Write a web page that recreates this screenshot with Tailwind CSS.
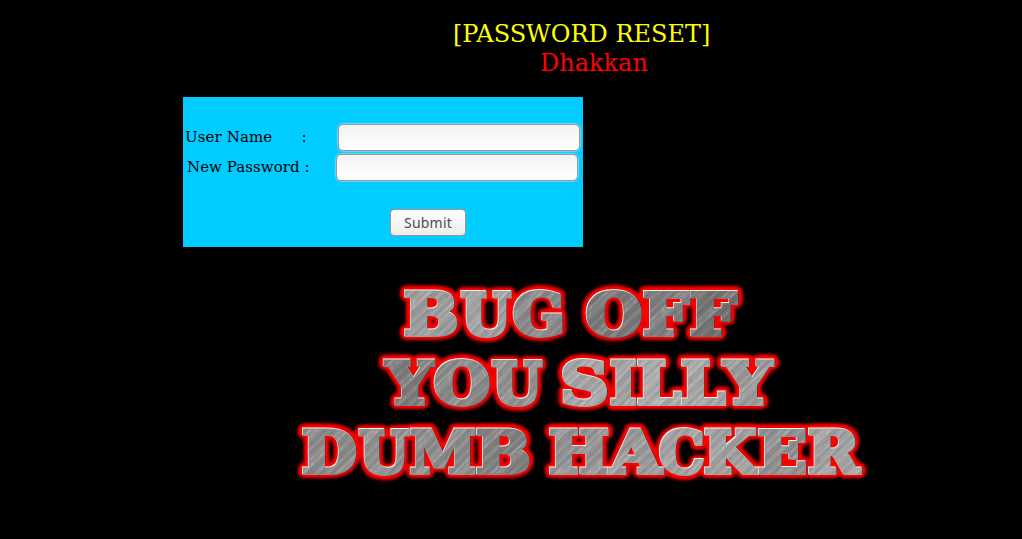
<!DOCTYPE html>
<html lang="en">
<head>
<meta charset="utf-8">
<title>Password Reset</title>
<script src="https://cdn.jsdelivr.net/npm/@tailwindcss/browser@4"></script>
</head>
<body class="h-screen overflow-hidden bg-black font-['DejaVu_Serif',serif]">
<header class="h-[97px] pt-[20px] text-2xl leading-[29px]">
  <h1 class="ml-[453px] whitespace-nowrap text-[#ffff00]">[PASSWORD RESET]</h1>
  <p class="ml-[540px] text-[#ff0000]">Dhakkan</p>
</header>
<form class="ml-[183px] h-[150px] w-[400px] bg-[#00ccff] pt-[26px] text-[15px] text-black">
  <div class="flex h-[30px] pl-0.5">
    <label for="u" class="w-[153px] whitespace-pre leading-[28px] tracking-[0.1px]">User Name      :</label>
    <input id="u" class="mt-px h-[27px] w-[242px] rounded-[5px] border border-[#999] bg-linear-to-b from-[#f3f3f3] to-white shadow-[0_0_1px_1px_#6fd4f4]">
  </div>
  <div class="flex h-[30px] pl-1">
    <label for="p" class="w-[149px] whitespace-pre leading-[28px] tracking-[0.06px]">New Password :</label>
    <input id="p" type="password" class="mt-px h-[27px] w-[242px] rounded-[5px] border border-[#999] bg-linear-to-b from-[#f3f3f3] to-white shadow-[0_0_1px_1px_#6fd4f4]">
  </div>
  <button type="button" class="mt-[26px] ml-[207px] block h-[27px] w-[76px] rounded-[4px] border border-[#999] bg-linear-to-b from-white to-[#ededed] font-['Noto_Sans',sans-serif] text-[14px] leading-[25px] tracking-[0.2px] text-[#4c4c4c]">Submit</button>
</form>
<svg class="ml-[290px] mt-[28px] block h-[215px] w-[590px]" viewBox="290 275 590 215">
  <defs>
    <pattern id="brush" width="47" height="90" patternUnits="userSpaceOnUse" patternTransform="rotate(43)">
      <path d="M4 0V90M30 0V90" stroke="#fff" stroke-opacity=".08" stroke-width="6"/>
      <path d="M1 0V90M6 0V90M13.500 0V60M15 20V90M22 0V90M28 0V50M34 0V90M41 30V90" stroke="#fff" stroke-opacity=".15" stroke-width=".7"/>
      <path d="M3 0V60M8.500 0V90M11 20V80M17.500 0V90M20 0V40M25 0V90M30 10V90M38 0V70M44 0V90" stroke="#222" stroke-opacity=".16" stroke-width=".7"/>
    </pattern>
    <filter id="glow" filterUnits="userSpaceOnUse" x="290" y="275" width="590" height="215"><feGaussianBlur stdDeviation="1.600"/></filter>
  </defs>
  <g font-family="DejaVu Serif" font-weight="700" font-size="57">
    <g id="halo" fill="#f00" stroke="#f00" stroke-width="12" stroke-linejoin="round" filter="url(#glow)"></g>
    <g id="letters" stroke-linejoin="miter" stroke-miterlimit="2"></g>
  </g>
</svg>
<script>
  // Each glyph: character, left edge, right edge, metal shade.
  const rows = [
    [334.5, [['B',404,458,'#9b9b9b'],['U',460,512,'#a0a0a0'],['G',513,563,'#888'],['O',586,642,'#787878'],['F',643,690,'#7e7e7e'],['F',690,738,'#727272']]],
    [403.5, [['Y',383,436,'#7b7b7b'],['O',434,490,'#888'],['U',491,543,'#919191'],['S',562,607,'#a5a5a5'],['I',610,637,'#a2a2a2'],['L',637,682,'#aaa'],['L',681,726,'#a6a6a6'],['Y',721,775,'#999']]],
    [472.5, [['D',302,357,'#8a8a8a'],['U',358,410,'#909090'],['M',410,476,'#8a8a8a'],['B',476,530,'#808080'],['H',549,609,'#929292'],['A',607,664,'#989898'],['C',659,704,'#a2a2a2'],['K',704,761,'#a0a0a0'],['E',758,806,'#909090'],['R',808,862,'#a0a0a0']]]
  ];
  const inset = 2;
  const ctx = document.createElement('canvas').getContext('2d');
  ctx.font = '700 57px "DejaVu Serif"';
  const ns = 'http://www.w3.org/2000/svg';
  function draw(parent, glyph, base, paint, width, shift) {
    const [ch, l, r] = glyph;
    const m = ctx.measureText(ch);
    const left = -m.actualBoundingBoxLeft;
    const scale = (r - l - 2 * inset) / (m.actualBoundingBoxRight - left);
    const t = document.createElementNS(ns, 'text');
    t.textContent = ch;
    t.setAttribute('x', (l + inset + shift) / scale - left);
    t.setAttribute('y', base + shift);
    t.setAttribute('transform', `scale(${scale} 1)`);
    if (paint) {
      t.setAttribute('fill', paint);
      t.setAttribute('stroke', paint);
      t.setAttribute('stroke-width', width);
    }
    parent.append(t);
  }
  const halo = document.getElementById('halo');
  const letters = document.getElementById('letters');
  for (const [base, glyphs] of rows) for (const g of glyphs) {
    draw(halo, g, base, null, 0, 0);
    draw(letters, g, base, '#5a3030', 4.2, 0.8);
    draw(letters, g, base, '#f4f4f4', 4, -0.5);
    draw(letters, g, base, g[3], 4, 0.15);
    draw(letters, g, base, 'url(#brush)', 4, 0.15);
  }
</script>
</body>
</html>
